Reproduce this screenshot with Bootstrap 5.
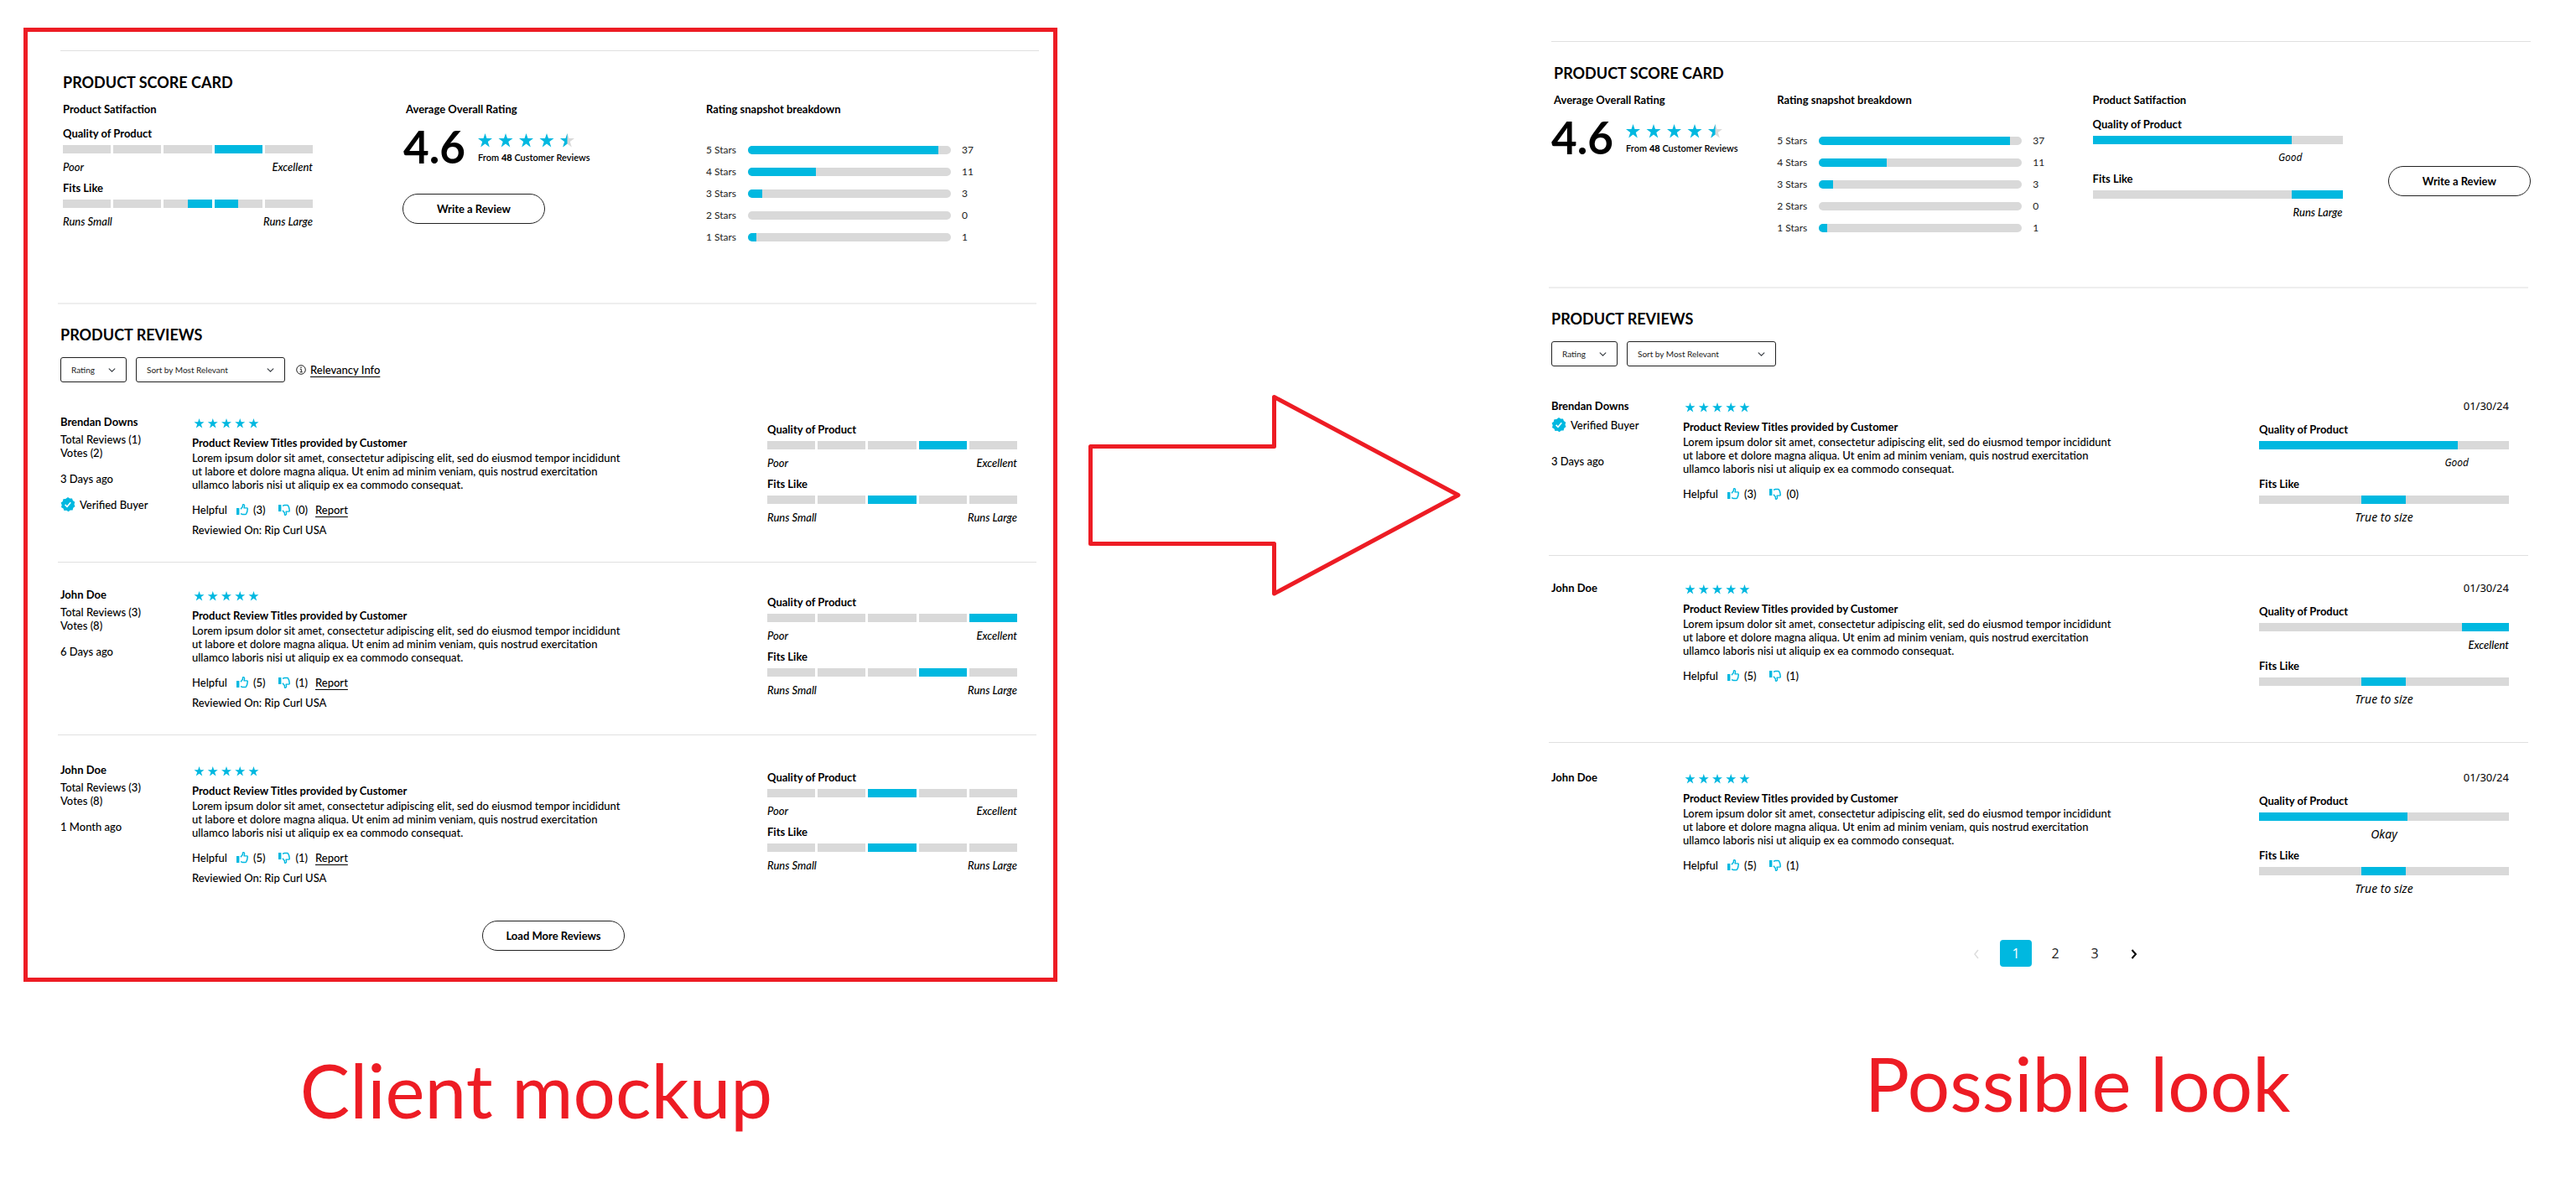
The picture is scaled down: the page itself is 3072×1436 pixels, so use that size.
<!DOCTYPE html>
<html lang="en">
<head>
<meta charset="utf-8">
<meta name="viewport" content="width=device-width, initial-scale=1">
<title>Product reviews: client mockup and possible look</title>
<link href="https://cdn.jsdelivr.net/npm/bootstrap@5.3.0/dist/css/bootstrap.min.css" rel="stylesheet">
<style>
:root{--cyan:#00b8e0;--track:#d9d9d9;--rule:#e0e0e0;--red:#ed1c24}
body{font-family:Lato,"Open Sans",sans-serif;font-size:13px;line-height:16px;font-weight:500;color:#000;background:#fff}
.board{display:grid;grid-template-columns:1233fr 586fr 1171fr;padding:33px 54px 40px 28px}
.frame{border:5px solid var(--red);padding:22px 17px 32px 36px}
.proposal{padding:16px 0 0}
.caption{color:var(--red);font-size:89px;line-height:106px;font-weight:400;margin:76px 0 0;padding-right:10px}
.caption-end{margin-top:68px;padding:0 0 0 90px}
.arrow{margin:437px 0 0 37px}
.h-section{font-size:18px;line-height:24px;font-weight:700;margin:0}
.h-label,.review-title,.reviewer{font-size:13px;line-height:16px;font-weight:700;margin:0}
.h-group{margin-bottom:13px}

.score{margin-left:3px;border-top:1px solid var(--rule);padding:25px 0 0 3px}
.score-frame{padding-bottom:70px}
.score-proposal{padding-bottom:62px}
.score-grid{display:grid;margin-top:12px}
.score-grid-3{grid-template-columns:409fr 358fr 397fr}
.score-grid-4{grid-template-columns:266fr 376fr 352fr 170fr}
.avg{margin:17px 0 0 -3px;gap:15px}
.avg-value{font-size:53px;line-height:40px;font-weight:700}
.avg-from{font-size:11px;line-height:14px;font-weight:600;margin-top:5px}
.btn-outline-pill{--bs-btn-color:#000;--bs-btn-bg:#fff;--bs-btn-border-color:#222;--bs-btn-hover-bg:#111;--bs-btn-hover-color:#fff;--bs-btn-padding-y:9px;--bs-btn-padding-x:8px;--bs-btn-font-size:13px;--bs-btn-font-weight:700;--bs-btn-line-height:16px;width:170px}
.write-below{margin:36px 0 0 -4px}
.write-side{margin-top:87px}
.breakdown{margin-top:33px;gap:10px}
.breakdown-row{gap:13px;font-size:12px;font-weight:400;color:#222}
.breakdown-row span:first-child{width:37px;white-space:nowrap}
.breakdown .progress{width:242px;border-radius:5px}
.progress{height:10px;border-radius:0;background:var(--track)}
.progress-bar{background:var(--cyan)}

.meter{width:298px}
.meter + .meter{margin-top:9px}
.meter .progress,.segments{margin-top:6px}
.segments{display:grid;grid-template-columns:repeat(5,1fr);gap:3px}
.segments span{height:10px;background:var(--track)}
.segments .on{background:var(--cyan)}
.segments .on-end{background:linear-gradient(90deg,var(--track) 50%,var(--cyan) 50%)}
.segments .on-start{background:linear-gradient(90deg,var(--cyan) 50%,var(--track) 50%)}
.meter-text{margin-top:8px;font-style:italic}
.said{font-family:"Noto Sans",sans-serif;font-size:14px;font-weight:400;text-align:center}
.said-good{font-size:12px;text-align:right;padding-right:48px}
.date{font-family:"Noto Sans",sans-serif;font-weight:400;text-align:right;margin-bottom:12px}

.reviews{border-top:2px solid #eee;margin-right:3px;padding-top:24px}
.reviews-head{padding-left:3px}
.filters{margin-top:15px;gap:11px}
.filters .form-select{font-size:10px;line-height:14px;font-weight:400;color:#222;border-color:#222;border-radius:3px;padding:7px 26px 7px 12px;background-size:9px 9px;background-position:right 12px center}
.f-rating{width:79px}
.f-sort{width:178px}
.relevancy{gap:5px;margin-left:2px}
.review-list{margin:39px 0 0}
.review-item{padding:0 23px 0 3px}
.review-item + .review-item{border-top:1px solid var(--rule);padding-top:30px}
.review-item:last-child{padding-top:33px}
.frame .review-item:not(:last-child){padding-bottom:30px}
.proposal .review-item:not(:last-child){padding-bottom:37px}
.proposal .review-item:nth-child(2){padding-bottom:43px}
.who{width:157px;flex:none}
.reviewer{margin-bottom:5px}
.proposal .reviewer{margin-bottom:7px}
.since{margin-top:15px}
.since-verified{margin-top:27px}
.verified{gap:5px}
.verified svg{margin:-1px 0}
.review-body{max-width:520px;padding-top:4px}
.stars-row{margin-left:2px}
.review-title{margin:9px 0 2px}
.helpful{margin-top:14px}
.vote{border:0;background:none;padding:0;font-weight:500;color:#000;gap:6px}
.vote-up{margin-left:11px}
.vote-down{margin-left:16px}
.report{margin-left:9px}
.plain-link{color:#000;text-underline-offset:3px}
.ratings{padding-top:9px}
.ratings-dated{padding-top:0}
.more{margin-top:43px;padding-left:15px}
.pager{margin:53px 0 0;padding-left:40px;gap:10px}
.pager .page-link{font-family:"Open Sans",sans-serif;font-size:16px;font-weight:400;line-height:22px;width:38px;padding:5px 0;border:0;border-radius:4px;color:#222;text-align:center;background:none}
.pager .active .page-link{background:var(--cyan);color:#fff}
.pager svg{vertical-align:-1px}
</style>
</head>
<body>
<svg width="0" height="0" class="position-absolute" aria-hidden="true">
  <defs>
    <path id="star" d="M8.5 0 10.5 6.1H17L11.8 10 13.8 16.4 8.5 12.5 3.2 16.4 5.2 10 0 6.1H6.500Z"/>
    <g id="stars-5" fill="#00b8e0"><use href="#star"/><use href="#star" x="23"/><use href="#star" x="46"/><use href="#star" x="69"/><use href="#star" x="92"/></g>
    <symbol id="stars-4h" viewBox="0 0 115 17"><g fill="#00b8e0"><use href="#star"/><use href="#star" x="24.500"/><use href="#star" x="49"/><use href="#star" x="73.500"/></g><use href="#star" x="98" fill="#d9d9d9"/><path fill="#00b8e0" d="M106.500 0V12.500L101.200 16.400 103.200 10 98 6.100H104.500Z"/></symbol>
    <symbol id="stars-s" viewBox="0 0 109 17"><use href="#stars-5"/></symbol>
    <symbol id="up" viewBox="0 0 14 14"><path fill="#00b8e0" d="M0 5H3.400V13H0Z"/><path fill="none" stroke="#00b8e0" stroke-width="1.400" stroke-linejoin="round" d="M5 6.200 7.400 3.300V1.600C7.400.4 9.600.4 9.600 2.400L9.100 4.900H12.400C13.500 4.900 13.500 6.300 12.900 6.800 13.300 7.400 13.200 8.300 12.600 8.700 12.900 9.400 12.600 10.200 12 10.500 12.100 11.600 11.700 12.500 10.400 12.500H7.200L5 11.700"/></symbol>
    <symbol id="down" viewBox="0 0 14 14"><path fill="#00b8e0" d="M0 1H3.400V9H0Z"/><path fill="none" stroke="#00b8e0" stroke-width="1.400" stroke-linejoin="round" d="M5 7.800 7.400 10.700V12.400C7.400 13.600 9.600 13.600 9.600 11.600L9.100 9.100H12.400C13.500 9.100 13.500 7.700 12.900 7.200 13.300 6.600 13.200 5.700 12.600 5.300 12.900 4.600 12.600 3.800 12 3.500 12.100 2.400 11.700 1.500 10.400 1.500H7.200L5 2.300"/></symbol>
    <symbol id="seal" viewBox="0 0 18 18"><path fill="#00b8e0" d="M9 0 11.200 1.600 14 1.500 14.900 4.100 17.300 5.700 16.500 8.400 17.500 11 15.300 12.700 14.600 15.400 11.800 15.500 9.600 17.200 7.300 15.700 4.500 16 3.500 13.400 1 11.900 1.700 9.200.6 6.600 2.800 4.900 3.400 2.200 6.200 2Z"/><path fill="none" stroke="#fff" stroke-width="1.600" d="M5.600 8.900 8 11.300 12.300 6.300"/></symbol>
  </defs>
</svg>

<main class="board">

  <section class="frame" aria-label="Client mockup">
    <div class="score score-frame">
      <h2 class="h-section">PRODUCT SCORE CARD</h2>
      <div class="score-grid score-grid-3">
        <div>
          <h3 class="h-label h-group">Product Satifaction</h3>
          <div class="meter">
            <h4 class="h-label">Quality of Product</h4>
            <div class="segments"><span></span><span></span><span></span><span class="on"></span><span></span></div>
            <div class="meter-text d-flex justify-content-between"><span>Poor</span><span>Excellent</span></div>
          </div>
          <div class="meter">
            <h4 class="h-label">Fits Like</h4>
            <div class="segments"><span></span><span></span><span class="on-end"></span><span class="on-start"></span><span></span></div>
            <div class="meter-text d-flex justify-content-between"><span>Runs Small</span><span>Runs Large</span></div>
          </div>
        </div>
        <div>
          <h3 class="h-label">Average Overall Rating</h3>
          <div class="avg d-flex">
            <div class="avg-value">4.6</div>
            <div class="pt-1">
              <svg class="d-block" width="115" height="17" role="img" aria-label="4.6 of 5 stars"><use href="#stars-4h"/></svg>
              <div class="avg-from">From <b>48</b> Customer Reviews</div>
            </div>
          </div>
          <button type="button" class="btn btn-outline-pill rounded-pill write-below">Write a Review</button>
        </div>
        <div>
          <h3 class="h-label">Rating snapshot breakdown</h3>
          <div class="breakdown d-flex flex-column">
            <div class="breakdown-row d-flex align-items-center"><span>5 Stars</span><div class="progress"><div class="progress-bar" style="width:94%"></div></div><span>37</span></div>
            <div class="breakdown-row d-flex align-items-center"><span>4 Stars</span><div class="progress"><div class="progress-bar" style="width:33.400%"></div></div><span>11</span></div>
            <div class="breakdown-row d-flex align-items-center"><span>3 Stars</span><div class="progress"><div class="progress-bar" style="width:7%"></div></div><span>3</span></div>
            <div class="breakdown-row d-flex align-items-center"><span>2 Stars</span><div class="progress"><div class="progress-bar" style="width:0%"></div></div><span>0</span></div>
            <div class="breakdown-row d-flex align-items-center"><span>1 Stars</span><div class="progress"><div class="progress-bar" style="width:4%"></div></div><span>1</span></div>
          </div>
        </div>
      </div>
    </div>

    <div class="reviews">
      <div class="reviews-head">
        <h2 class="h-section">PRODUCT REVIEWS</h2>
        <div class="filters d-flex align-items-center">
          <select class="form-select f-rating" aria-label="Rating"><option>Rating</option></select>
          <select class="form-select f-sort" aria-label="Sort reviews"><option>Sort by Most Relevant</option></select>
          <div class="relevancy d-flex align-items-center">
            <svg width="12" height="12" viewBox="0 0 12 12" aria-hidden="true"><circle cx="6" cy="6" r="5.300" fill="none" stroke="#222"/><path d="M4.800 5.300H6.300V8.700M4.600 8.800H7.800" fill="none" stroke="#222"/><circle cx="6" cy="3.200" r=".8" fill="#222"/></svg>
            <a class="plain-link" href="#">Relevancy Info</a>
          </div>
        </div>
      </div>

      <div class="review-list">
        <article class="review-item d-flex">
          <div class="who">
            <h3 class="reviewer">Brendan Downs</h3>
            <div>Total Reviews (1)</div>
            <div>Votes (2)</div>
            <div class="since">3 Days ago</div>
            <div class="since verified d-flex align-items-center"><svg width="18" height="18" aria-hidden="true"><use href="#seal"/></svg>Verified Buyer</div>
          </div>
          <div class="review-body">
            <svg class="d-block stars-row" width="78" height="12" role="img" aria-label="5 of 5 stars"><use href="#stars-s"/></svg>
            <h4 class="review-title">Product Review Titles provided by Customer</h4>
            <p class="m-0">Lorem ipsum dolor sit amet, consectetur adipiscing elit, sed do eiusmod tempor incididunt ut labore et dolore magna aliqua. Ut enim ad minim veniam, quis nostrud exercitation ullamco laboris nisi ut aliquip ex ea commodo consequat.</p>
            <div class="helpful d-flex align-items-center"><span>Helpful</span>
              <button type="button" class="vote vote-up d-flex align-items-center"><svg width="14" height="14" aria-label="Helpful"><use href="#up"/></svg>(3)</button>
              <button type="button" class="vote vote-down d-flex align-items-center"><svg width="14" height="14" aria-label="Not helpful"><use href="#down"/></svg>(0)</button>
              <a class="plain-link report" href="#">Report</a></div>
            <div class="mt-2">Reviewied On: Rip Curl USA</div>
          </div>
          <div class="ratings ms-auto">
            <div class="meter">
              <h4 class="h-label">Quality of Product</h4>
              <div class="segments"><span></span><span></span><span></span><span class="on"></span><span></span></div>
              <div class="meter-text d-flex justify-content-between"><span>Poor</span><span>Excellent</span></div>
            </div>
            <div class="meter">
              <h4 class="h-label">Fits Like</h4>
              <div class="segments"><span></span><span></span><span class="on"></span><span></span><span></span></div>
              <div class="meter-text d-flex justify-content-between"><span>Runs Small</span><span>Runs Large</span></div>
            </div>
          </div>
        </article>

        <article class="review-item d-flex">
          <div class="who">
            <h3 class="reviewer">John Doe</h3>
            <div>Total Reviews (3)</div>
            <div>Votes (8)</div>
            <div class="since">6 Days ago</div>
          </div>
          <div class="review-body">
            <svg class="d-block stars-row" width="78" height="12" role="img" aria-label="5 of 5 stars"><use href="#stars-s"/></svg>
            <h4 class="review-title">Product Review Titles provided by Customer</h4>
            <p class="m-0">Lorem ipsum dolor sit amet, consectetur adipiscing elit, sed do eiusmod tempor incididunt ut labore et dolore magna aliqua. Ut enim ad minim veniam, quis nostrud exercitation ullamco laboris nisi ut aliquip ex ea commodo consequat.</p>
            <div class="helpful d-flex align-items-center"><span>Helpful</span>
              <button type="button" class="vote vote-up d-flex align-items-center"><svg width="14" height="14" aria-label="Helpful"><use href="#up"/></svg>(5)</button>
              <button type="button" class="vote vote-down d-flex align-items-center"><svg width="14" height="14" aria-label="Not helpful"><use href="#down"/></svg>(1)</button>
              <a class="plain-link report" href="#">Report</a></div>
            <div class="mt-2">Reviewied On: Rip Curl USA</div>
          </div>
          <div class="ratings ms-auto">
            <div class="meter">
              <h4 class="h-label">Quality of Product</h4>
              <div class="segments"><span></span><span></span><span></span><span></span><span class="on"></span></div>
              <div class="meter-text d-flex justify-content-between"><span>Poor</span><span>Excellent</span></div>
            </div>
            <div class="meter">
              <h4 class="h-label">Fits Like</h4>
              <div class="segments"><span></span><span></span><span></span><span class="on"></span><span></span></div>
              <div class="meter-text d-flex justify-content-between"><span>Runs Small</span><span>Runs Large</span></div>
            </div>
          </div>
        </article>

        <article class="review-item d-flex">
          <div class="who">
            <h3 class="reviewer">John Doe</h3>
            <div>Total Reviews (3)</div>
            <div>Votes (8)</div>
            <div class="since">1 Month ago</div>
          </div>
          <div class="review-body">
            <svg class="d-block stars-row" width="78" height="12" role="img" aria-label="5 of 5 stars"><use href="#stars-s"/></svg>
            <h4 class="review-title">Product Review Titles provided by Customer</h4>
            <p class="m-0">Lorem ipsum dolor sit amet, consectetur adipiscing elit, sed do eiusmod tempor incididunt ut labore et dolore magna aliqua. Ut enim ad minim veniam, quis nostrud exercitation ullamco laboris nisi ut aliquip ex ea commodo consequat.</p>
            <div class="helpful d-flex align-items-center"><span>Helpful</span>
              <button type="button" class="vote vote-up d-flex align-items-center"><svg width="14" height="14" aria-label="Helpful"><use href="#up"/></svg>(5)</button>
              <button type="button" class="vote vote-down d-flex align-items-center"><svg width="14" height="14" aria-label="Not helpful"><use href="#down"/></svg>(1)</button>
              <a class="plain-link report" href="#">Report</a></div>
            <div class="mt-2">Reviewied On: Rip Curl USA</div>
          </div>
          <div class="ratings ms-auto">
            <div class="meter">
              <h4 class="h-label">Quality of Product</h4>
              <div class="segments"><span></span><span></span><span class="on"></span><span></span><span></span></div>
              <div class="meter-text d-flex justify-content-between"><span>Poor</span><span>Excellent</span></div>
            </div>
            <div class="meter">
              <h4 class="h-label">Fits Like</h4>
              <div class="segments"><span></span><span></span><span class="on"></span><span></span><span></span></div>
              <div class="meter-text d-flex justify-content-between"><span>Runs Small</span><span>Runs Large</span></div>
            </div>
          </div>
        </article>
      </div>
      <div class="more text-center"><button type="button" class="btn btn-outline-pill rounded-pill">Load More Reviews</button></div>
    </div>
  </section>

  <div><svg class="arrow" width="444" height="241" viewBox="0 0 444 241" role="img" aria-label="becomes"><path fill="none" stroke="#ed1c24" stroke-width="5" stroke-linejoin="round" d="M2.500 62.500H221.500V3.500L441 120.500 221.500 238V178.500H2.500Z"/></svg></div>

  <section class="proposal" aria-label="Possible look">
    <div class="score score-proposal">
      <h2 class="h-section">PRODUCT SCORE CARD</h2>
      <div class="score-grid score-grid-4">
        <div>
          <h3 class="h-label">Average Overall Rating</h3>
          <div class="avg d-flex">
            <div class="avg-value">4.6</div>
            <div class="pt-1">
              <svg class="d-block" width="115" height="17" role="img" aria-label="4.6 of 5 stars"><use href="#stars-4h"/></svg>
              <div class="avg-from">From <b>48</b> Customer Reviews</div>
            </div>
          </div>
        </div>
        <div>
          <h3 class="h-label">Rating snapshot breakdown</h3>
          <div class="breakdown d-flex flex-column">
            <div class="breakdown-row d-flex align-items-center"><span>5 Stars</span><div class="progress"><div class="progress-bar" style="width:94%"></div></div><span>37</span></div>
            <div class="breakdown-row d-flex align-items-center"><span>4 Stars</span><div class="progress"><div class="progress-bar" style="width:33.400%"></div></div><span>11</span></div>
            <div class="breakdown-row d-flex align-items-center"><span>3 Stars</span><div class="progress"><div class="progress-bar" style="width:7%"></div></div><span>3</span></div>
            <div class="breakdown-row d-flex align-items-center"><span>2 Stars</span><div class="progress"><div class="progress-bar" style="width:0%"></div></div><span>0</span></div>
            <div class="breakdown-row d-flex align-items-center"><span>1 Stars</span><div class="progress"><div class="progress-bar" style="width:4%"></div></div><span>1</span></div>
          </div>
        </div>
        <div>
          <h3 class="h-label h-group">Product Satifaction</h3>
          <div class="meter">
            <h4 class="h-label">Quality of Product</h4>
            <div class="progress"><div class="progress-bar" style="width:79.700%"></div></div>
            <div class="meter-text said said-good">Good</div>
          </div>
          <div class="meter">
            <h4 class="h-label">Fits Like</h4>
            <div class="progress justify-content-end"><div class="progress-bar" style="width:20.400%"></div></div>
            <div class="meter-text text-end">Runs Large</div>
          </div>
        </div>
        <div><button type="button" class="btn btn-outline-pill rounded-pill write-side">Write a Review</button></div>
      </div>
    </div>

    <div class="reviews">
      <div class="reviews-head">
        <h2 class="h-section">PRODUCT REVIEWS</h2>
        <div class="filters d-flex align-items-center">
          <select class="form-select f-rating" aria-label="Rating"><option>Rating</option></select>
          <select class="form-select f-sort" aria-label="Sort reviews"><option>Sort by Most Relevant</option></select>
        </div>
      </div>

      <div class="review-list">
        <article class="review-item d-flex">
          <div class="who">
            <h3 class="reviewer">Brendan Downs</h3>
            <div class="verified d-flex align-items-center"><svg width="18" height="18" aria-hidden="true"><use href="#seal"/></svg>Verified Buyer</div>
            <div class="since-verified">3 Days ago</div>
          </div>
          <div class="review-body">
            <svg class="d-block stars-row" width="78" height="12" role="img" aria-label="5 of 5 stars"><use href="#stars-s"/></svg>
            <h4 class="review-title">Product Review Titles provided by Customer</h4>
            <p class="m-0">Lorem ipsum dolor sit amet, consectetur adipiscing elit, sed do eiusmod tempor incididunt ut labore et dolore magna aliqua. Ut enim ad minim veniam, quis nostrud exercitation ullamco laboris nisi ut aliquip ex ea commodo consequat.</p>
            <div class="helpful d-flex align-items-center"><span>Helpful</span>
              <button type="button" class="vote vote-up d-flex align-items-center"><svg width="14" height="14" aria-label="Helpful"><use href="#up"/></svg>(3)</button>
              <button type="button" class="vote vote-down d-flex align-items-center"><svg width="14" height="14" aria-label="Not helpful"><use href="#down"/></svg>(0)</button></div>
          </div>
          <div class="ratings ratings-dated ms-auto">
            <div class="date">01/30/24</div>
            <div class="meter">
              <h4 class="h-label">Quality of Product</h4>
              <div class="progress"><div class="progress-bar" style="width:79.600%"></div></div>
              <div class="meter-text said said-good">Good</div>
            </div>
            <div class="meter">
              <h4 class="h-label">Fits Like</h4>
              <div class="progress"><div class="progress-bar" style="width:17.800%;margin-left:41%"></div></div>
              <div class="meter-text said">True to size</div>
            </div>
          </div>
        </article>

        <article class="review-item d-flex">
          <div class="who"><h3 class="reviewer">John Doe</h3></div>
          <div class="review-body">
            <svg class="d-block stars-row" width="78" height="12" role="img" aria-label="5 of 5 stars"><use href="#stars-s"/></svg>
            <h4 class="review-title">Product Review Titles provided by Customer</h4>
            <p class="m-0">Lorem ipsum dolor sit amet, consectetur adipiscing elit, sed do eiusmod tempor incididunt ut labore et dolore magna aliqua. Ut enim ad minim veniam, quis nostrud exercitation ullamco laboris nisi ut aliquip ex ea commodo consequat.</p>
            <div class="helpful d-flex align-items-center"><span>Helpful</span>
              <button type="button" class="vote vote-up d-flex align-items-center"><svg width="14" height="14" aria-label="Helpful"><use href="#up"/></svg>(5)</button>
              <button type="button" class="vote vote-down d-flex align-items-center"><svg width="14" height="14" aria-label="Not helpful"><use href="#down"/></svg>(1)</button></div>
          </div>
          <div class="ratings ratings-dated ms-auto">
            <div class="date">01/30/24</div>
            <div class="meter">
              <h4 class="h-label">Quality of Product</h4>
              <div class="progress justify-content-end"><div class="progress-bar" style="width:18.700%"></div></div>
              <div class="meter-text text-end">Excellent</div>
            </div>
            <div class="meter">
              <h4 class="h-label">Fits Like</h4>
              <div class="progress"><div class="progress-bar" style="width:17.800%;margin-left:41%"></div></div>
              <div class="meter-text said">True to size</div>
            </div>
          </div>
        </article>

        <article class="review-item d-flex">
          <div class="who"><h3 class="reviewer">John Doe</h3></div>
          <div class="review-body">
            <svg class="d-block stars-row" width="78" height="12" role="img" aria-label="5 of 5 stars"><use href="#stars-s"/></svg>
            <h4 class="review-title">Product Review Titles provided by Customer</h4>
            <p class="m-0">Lorem ipsum dolor sit amet, consectetur adipiscing elit, sed do eiusmod tempor incididunt ut labore et dolore magna aliqua. Ut enim ad minim veniam, quis nostrud exercitation ullamco laboris nisi ut aliquip ex ea commodo consequat.</p>
            <div class="helpful d-flex align-items-center"><span>Helpful</span>
              <button type="button" class="vote vote-up d-flex align-items-center"><svg width="14" height="14" aria-label="Helpful"><use href="#up"/></svg>(5)</button>
              <button type="button" class="vote vote-down d-flex align-items-center"><svg width="14" height="14" aria-label="Not helpful"><use href="#down"/></svg>(1)</button></div>
          </div>
          <div class="ratings ratings-dated ms-auto">
            <div class="date">01/30/24</div>
            <div class="meter">
              <h4 class="h-label">Quality of Product</h4>
              <div class="progress"><div class="progress-bar" style="width:59.500%"></div></div>
              <div class="meter-text said">Okay</div>
            </div>
            <div class="meter">
              <h4 class="h-label">Fits Like</h4>
              <div class="progress"><div class="progress-bar" style="width:17.800%;margin-left:41%"></div></div>
              <div class="meter-text said">True to size</div>
            </div>
          </div>
        </article>
      </div>
      <nav aria-label="Review pages">
        <ul class="pagination pager justify-content-center">
          <li class="page-item disabled"><a class="page-link" aria-label="Previous"><svg width="8" height="12" viewBox="0 0 8 12"><path fill="none" stroke="#ddd" stroke-width="1.500" d="M6 1 2 6 6 11"/></svg></a></li>
          <li class="page-item active"><a class="page-link" href="#" aria-current="page">1</a></li>
          <li class="page-item"><a class="page-link" href="#">2</a></li>
          <li class="page-item"><a class="page-link" href="#">3</a></li>
          <li class="page-item"><a class="page-link" href="#" aria-label="Next"><svg width="8" height="12" viewBox="0 0 8 12"><path fill="none" stroke="#000" stroke-width="2" d="M1.500 1 6 6 1.500 11"/></svg></a></li>
        </ul>
      </nav>
    </div>
  </section>

  <p class="caption text-center">Client mockup</p>
  <div></div>
  <p class="caption caption-end text-center">Possible look</p>
</main>
<script src="https://cdn.jsdelivr.net/npm/bootstrap@5.3.0/dist/js/bootstrap.bundle.min.js"></script>
</body>
</html>
